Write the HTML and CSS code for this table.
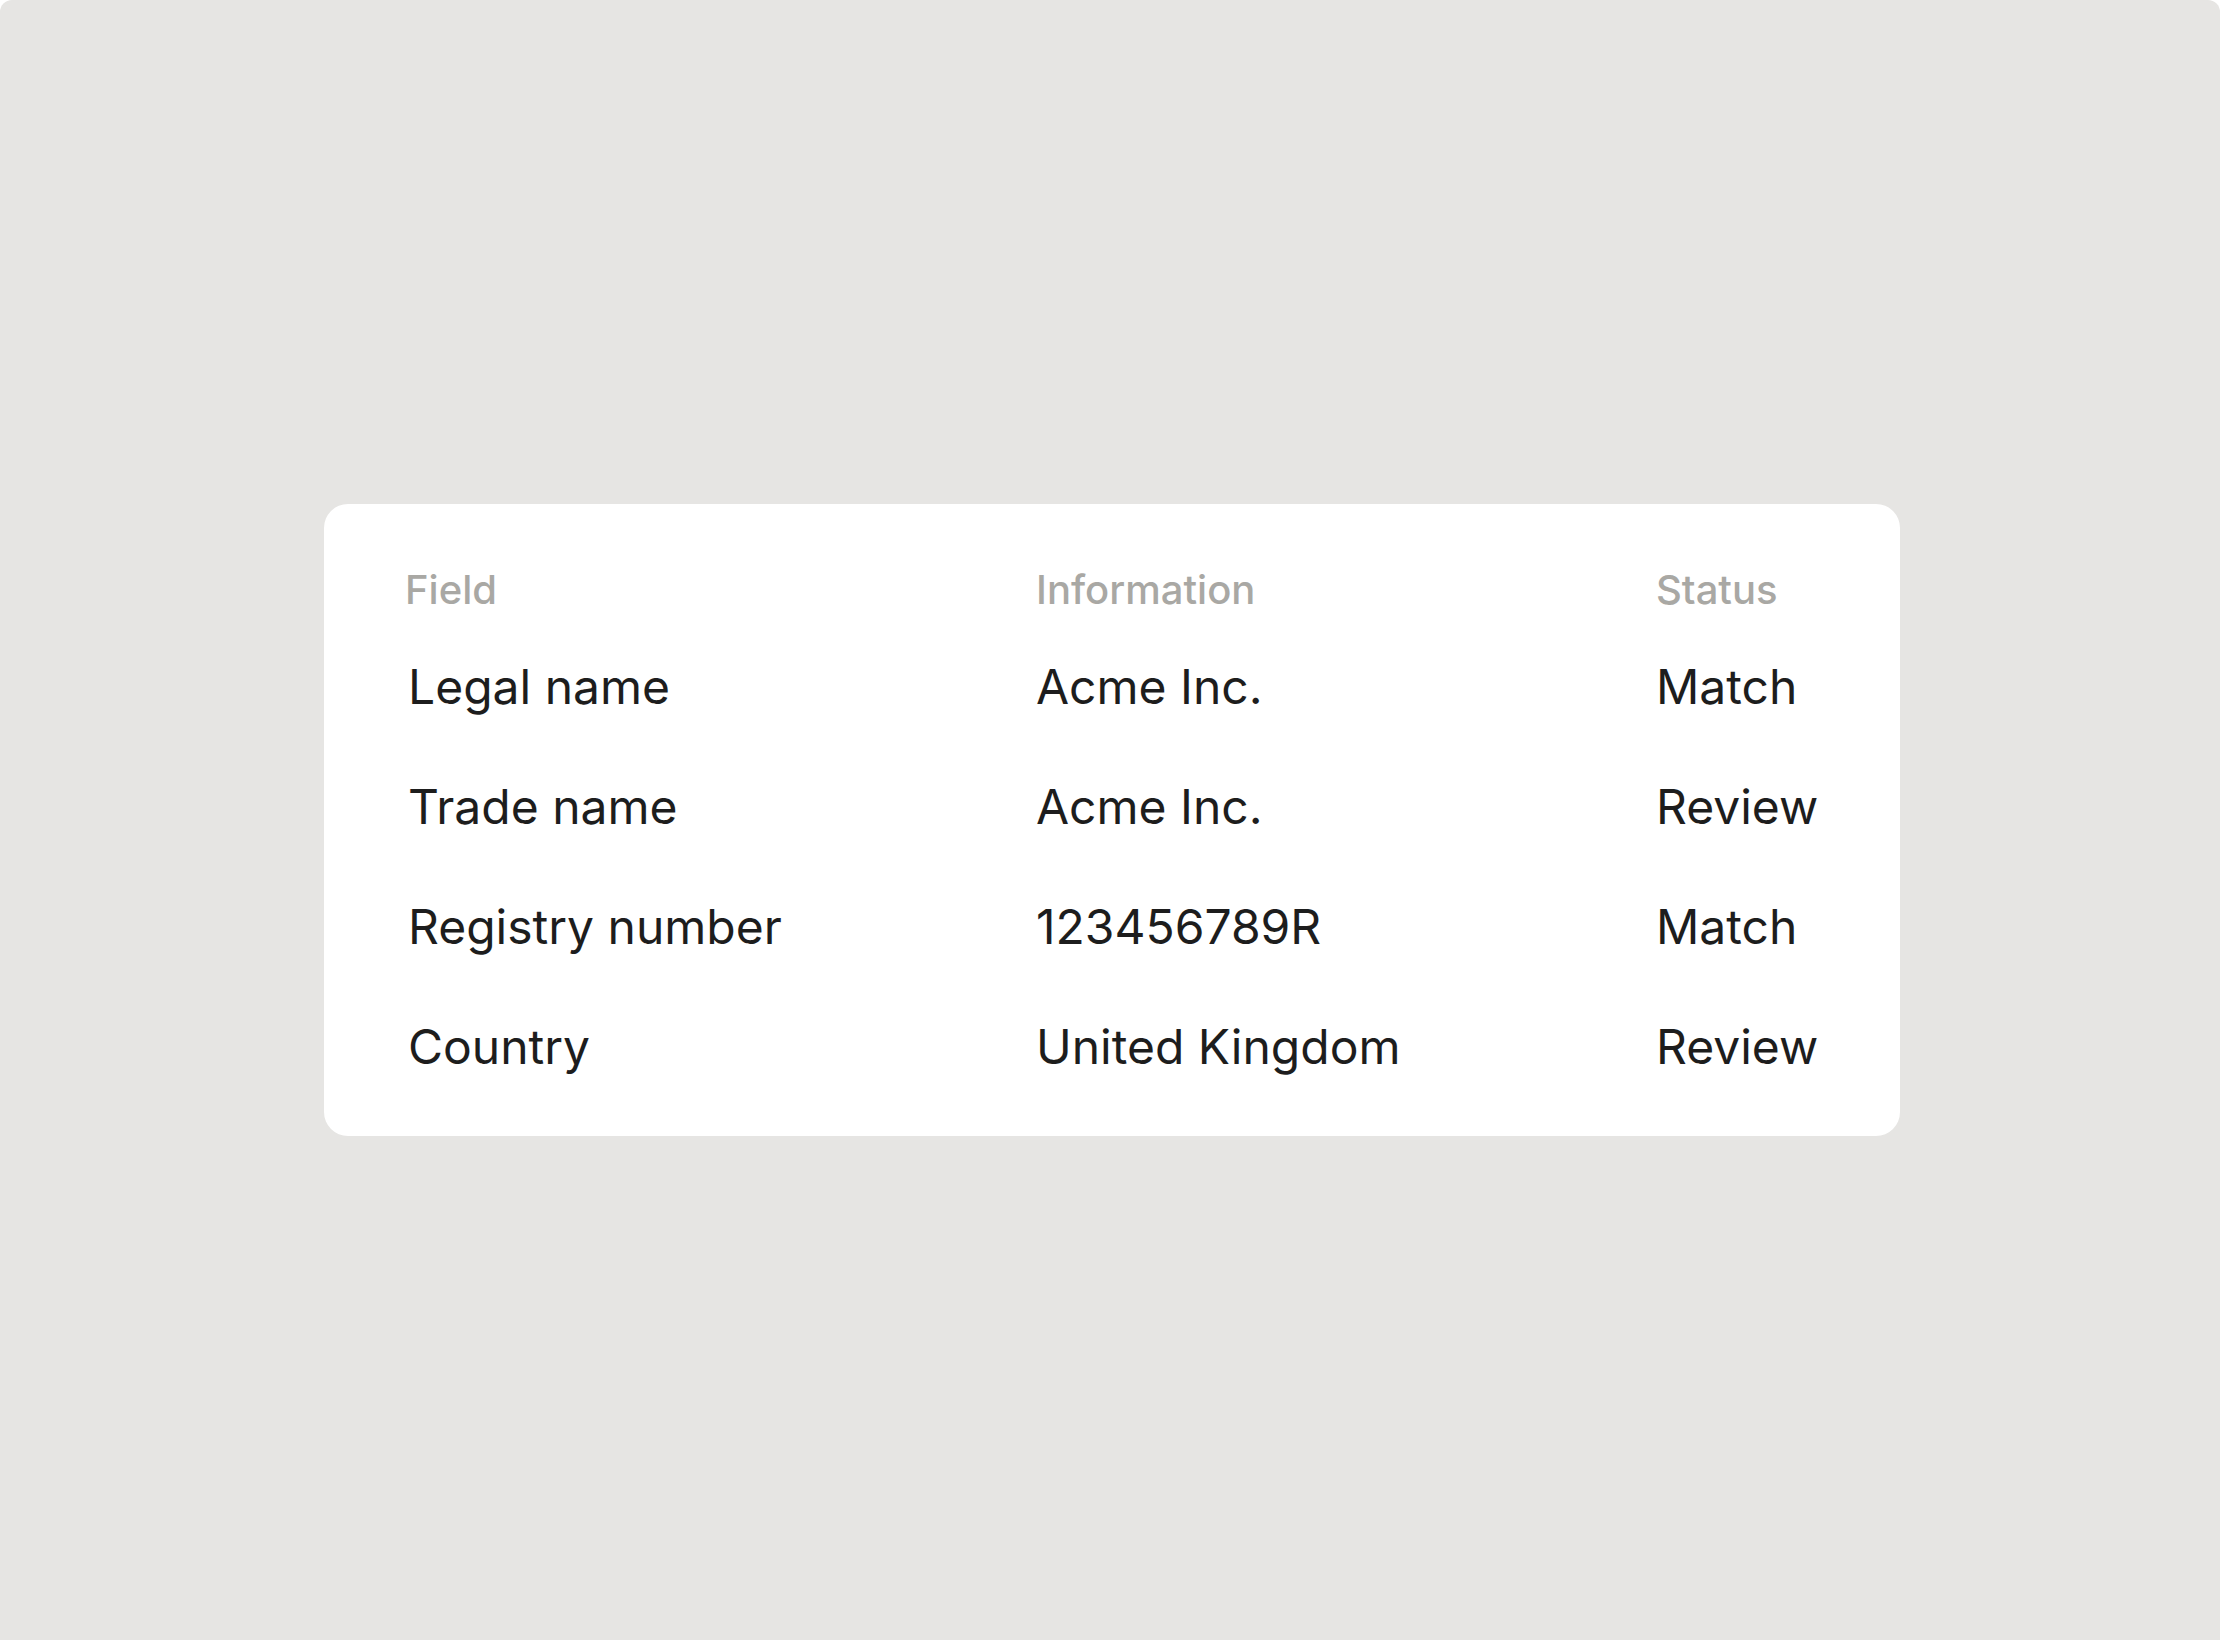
FILE: index.html
```html
<!DOCTYPE html>
<html lang="en">
<head>
<meta charset="utf-8">
<title>Verification</title>
<link rel="stylesheet" href="styles.css">
</head>
<body>
<div class="page">
  <div class="card">
    <div class="grid">
      <div class="th first">Field</div>
      <div class="th">Information</div>
      <div class="th">Status</div>

      <div class="td first">Legal name</div>
      <div class="td">Acme Inc.</div>
      <div class="td">Match</div>

      <div class="td first">Trade name</div>
      <div class="td">Acme Inc.</div>
      <div class="td">Review</div>

      <div class="td first">Registry number</div>
      <div class="td">123456789R</div>
      <div class="td">Match</div>

      <div class="td first">Country</div>
      <div class="td">United Kingdom</div>
      <div class="td">Review</div>
    </div>
  </div>
</div>
</body>
</html>
```

FILE: styles.css
```css
html, body {
  margin: 0;
  padding: 0;
  background: #ffffff;
}

.page {
  width: 2220px;
  height: 1640px;
  box-sizing: border-box;
  padding-left: 4px;
  background: #e6e5e3;
  border-radius: 12px 12px 0 0;
  display: flex;
  align-items: center;
  justify-content: center;
  font-family: Inter, "Noto Sans", "Liberation Sans", sans-serif;
}

.card {
  width: 1576px;
  box-sizing: border-box;
  background: #ffffff;
  border-radius: 24px;
  padding: 62px 80px 60px 80px;
}

.grid {
  display: grid;
  grid-template-columns: 632px 620px 1fr;
  row-gap: 62px;
}

.th {
  font-size: 40px;
  line-height: 48px;
  font-weight: 500;
  color: #a9a8a4;
  margin-bottom: -18px;
}

.th.first {
  padding-left: 1px;
}

.td {
  font-size: 48px;
  line-height: 58px;
  font-weight: 400;
  color: #1d1d1d;
}

.td.first {
  padding-left: 4px;
}
```
